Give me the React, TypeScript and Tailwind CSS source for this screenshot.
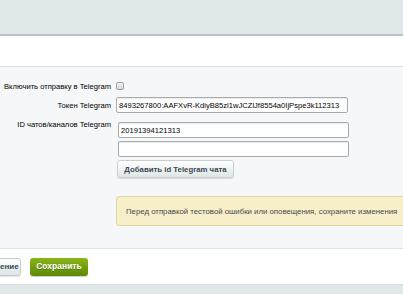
export default function App() {
  return (
    <div className="w-[403px] h-[294px] overflow-hidden bg-[#e1e8ea] font-['Liberation_Sans',Arial,sans-serif] text-[7.6px] leading-[9px] text-black">
      {/* top bar */}
      <div className="h-[36px] bg-[#e1e8ea] border-b-2 border-[#b9c2c5]" />
      <div className="h-[31px] bg-white border-b border-[#d8dfe1]" />

      {/* form */}
      <div className="h-[181px] bg-[#f5f7f8] pt-[15px]">
        <div className="flex items-center h-[8px]">
          <div className="w-[112px] text-right pr-[1px] whitespace-nowrap">Включить отправку в Telegram</div>
          <span className="ml-[4px] w-[8px] h-[8px] rounded-[2px] border border-[#9aa3a6] bg-gradient-to-b from-[#f4f6f7] to-[#d3d9dc]" />
        </div>

        <div className="flex items-center mt-[7px]">
          <div className="w-[112px] text-right pr-[1px] whitespace-nowrap">Токен Telegram</div>
          <div className="ml-[4px] w-[232px] h-[16px] flex items-center px-[2px] bg-white border border-[#a4acaf] rounded-[2px] shadow-[inset_0_1px_1px_rgba(0,0,0,0.08)] whitespace-nowrap overflow-hidden">
            8493267800:AAFXvR-KdiyB85zl1wJCZlJf8554a0IjPspe3k112313
          </div>
        </div>

        <div className="flex mt-[6px]">
          <div className="w-[112px] text-right pr-[1px] pt-[1px] whitespace-nowrap">ID чатов/каналов Telegram</div>
          <div className="ml-[6px] flex flex-col pt-[3px]">
            <div className="w-[231px] h-[16px] flex items-center px-[2px] bg-white border border-[#a4acaf] rounded-[2px] shadow-[inset_0_1px_1px_rgba(0,0,0,0.08)]">
              20191394121313
            </div>
            <div className="mt-[3px] w-[231px] h-[16px] bg-white border border-[#a4acaf] rounded-[2px] shadow-[inset_0_1px_1px_rgba(0,0,0,0.08)]" />
            <button className="-ml-[1px] mt-[3px] w-[117px] h-[18px] rounded-[3px] border border-[#c9d0d3] bg-gradient-to-b from-white to-[#dfe5e7] shadow-[0_1px_1px_rgba(0,0,0,0.12)] font-bold text-[#3c4a53] text-[7.8px]">
              Добавить id Telegram чата
            </button>
          </div>
        </div>

        <div className="ml-[116px] mt-[18px] w-[300px] h-[30px] flex items-center pl-[9px] rounded-[3px] border border-[#e0d6a0] bg-[#f7efc9] text-[#4a4a4a] text-[7.8px] whitespace-nowrap">
          Перед отправкой тестовой ошибки или оповещения, сохраните изменения
        </div>
      </div>

      {/* footer buttons */}
      <div className="h-[37px] bg-white border-t border-[#dce3e5] border-b border-b-[#d6dde0] flex items-center">
        <button className="-ml-[30px] h-[18px] w-[51px] rounded-[3px] border border-[#c6cdd0] bg-gradient-to-b from-white to-[#dde3e6] shadow-[0_1px_1px_rgba(0,0,0,0.12)] font-bold text-[#3c4a53] text-[8px] text-right pr-[4px] whitespace-nowrap overflow-hidden">
          Отклонение
        </button>
        <button className="ml-[9px] h-[18px] w-[58px] rounded-[3px] bg-gradient-to-b from-[#89b417] to-[#5d8a05] shadow-[0_1px_1px_rgba(0,0,0,0.2)] font-bold text-white text-[8.5px] [text-shadow:0_1px_0_rgba(0,0,0,0.25)]">
          Сохранить
        </button>
      </div>
    </div>
  );
}
